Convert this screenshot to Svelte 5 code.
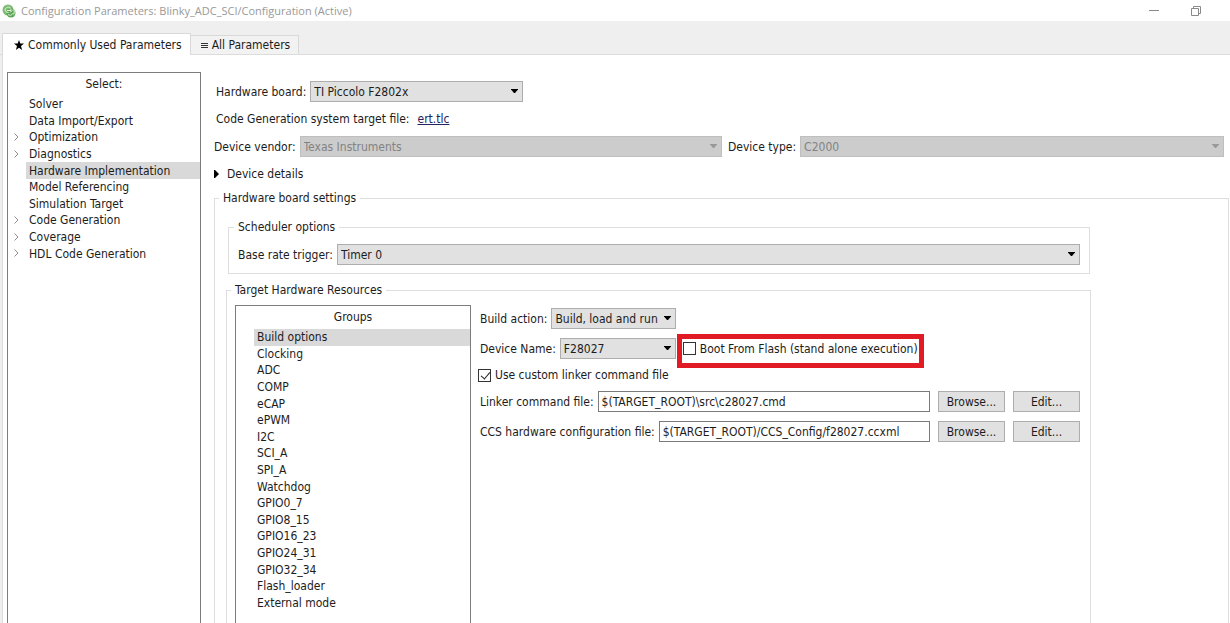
<script lang="ts">
	const pages = [
		{ name: 'Solver' },
		{ name: 'Data Import/Export' },
		{ name: 'Optimization', nested: true },
		{ name: 'Diagnostics', nested: true },
		{ name: 'Hardware Implementation' },
		{ name: 'Model Referencing' },
		{ name: 'Simulation Target' },
		{ name: 'Code Generation', nested: true },
		{ name: 'Coverage', nested: true },
		{ name: 'HDL Code Generation', nested: true }
	];

	const groups = [
		'Build options',
		'Clocking',
		'ADC',
		'COMP',
		'eCAP',
		'ePWM',
		'I2C',
		'SCI_A',
		'SPI_A',
		'Watchdog',
		'GPIO0_7',
		'GPIO8_15',
		'GPIO16_23',
		'GPIO24_31',
		'GPIO32_34',
		'Flash_loader',
		'External mode'
	];

	let page = $state('Hardware Implementation');
	let group = $state('Build options');
	let bootFromFlash = $state(false);
	let customLinker = $state(true);
	let linkerFile = $state('$(TARGET_ROOT)\\src\\c28027.cmd');
	let ccsFile = $state('$(TARGET_ROOT)/CCS_Config/f28027.ccxml');
</script>

{#snippet dropdown(id: string, value: string, disabled = false)}
	<span class="dropdown" class:disabled>
		<select {id} {disabled}>
			<option>{value}</option>
		</select>
		<svg class="arrow" viewBox="0 0 7 4" aria-hidden="true"><path d="M0 0h7v.5L4 4H3L0 .5z" /></svg>
	</span>
{/snippet}

<div class="window">
	<header class="titlebar">
		<svg class="logo" viewBox="0 0 14 14" aria-hidden="true">
			<circle cx="6" cy="6" r="5.5" fill="#7dbb72" />
			<circle cx="9" cy="9" r="4.5" fill="#5ba655" />
			<path
				d="M3 5.500C4 3 7 2.500 8.500 4M3 5.500c0 2 1.500 3 3.500 3M5 6.500h4M8 4.500l2 2-2 2M6 10.500c2 1.500 4.500.500 5-1.500M11.500 5.500c1 1.500 1 3.500 0 5"
				fill="none"
				stroke="#e5f4df"
			/>
		</svg>
		<span class="title">Configuration Parameters: Blinky_ADC_SCI/Configuration (Active)</span>
		<button class="windowButton" aria-label="Minimize">
			<svg viewBox="0 0 10 10"><path d="M0 4.500h10" /></svg>
		</button>
		<button class="windowButton" aria-label="Restore">
			<svg viewBox="0 0 10 10"><path d="M.5 2.500h7v7h-7zM2.500 2.500v-2h7v7h-2" /></svg>
		</button>
	</header>

	<nav class="tabs">
		<button class="tab active">
			<svg viewBox="0 0 10 10" aria-hidden="true">
				<path d="M5 0l1.300 3.600H10L7 6l1.100 4L5 7.700 1.900 10 3 6 0 3.600h3.700z" />
			</svg>
			Commonly Used Parameters
		</button>
		<button class="tab">
			<svg class="bars" viewBox="0 0 7 7" aria-hidden="true"><path d="M0 1.500h7M0 3.500h7M0 5.500h7" /></svg>
			All Parameters
		</button>
	</nav>

	<main>
		<aside class="panel sidebar">
			<h2>Select:</h2>
			<ul class="pages">
				{#each pages as item}
					<li>
						{#if item.nested}
							<svg class="chevron" viewBox="0 0 5 8" aria-hidden="true"><path d="M.5.500L4 4 .5 7.500" /></svg>
						{/if}
						<button class:selected={page === item.name} onclick={() => (page = item.name)}>
							{item.name}
						</button>
					</li>
				{/each}
			</ul>
		</aside>

		<section class="content">
			<div class="row indent board">
				<label for="board">Hardware board:</label>
				{@render dropdown('board', 'TI Piccolo F2802x')}
			</div>
			<div class="row indent target">
				<span>Code Generation system target file:</span>
				<a href="#ert">ert.tlc</a>
			</div>
			<div class="devices">
				<div class="row">
					<label for="vendor">Device vendor:</label>
					{@render dropdown('vendor', 'Texas Instruments', true)}
				</div>
				<div class="row">
					<label for="type">Device type:</label>
					{@render dropdown('type', 'C2000', true)}
				</div>
			</div>
			<button class="details">
				<svg viewBox="0 0 5 8" aria-hidden="true"><path d="M0 0h1l4 4-4 4H0z" /></svg>
				Device details
			</button>

			<fieldset class="settings">
				<legend>Hardware board settings</legend>

				<fieldset class="scheduler">
					<legend>Scheduler options</legend>
					<div class="row">
						<label for="trigger">Base rate trigger:</label>
						{@render dropdown('trigger', 'Timer 0')}
					</div>
				</fieldset>

				<fieldset class="resources">
					<legend>Target Hardware Resources</legend>

					<div class="panel groups">
						<h2>Groups</h2>
						<ul>
							{#each groups as name}
								<li>
									<button class:selected={group === name} onclick={() => (group = name)}>{name}</button>
								</li>
							{/each}
						</ul>
					</div>

					<div class="options">
						<div class="row action">
							<label for="action">Build action:</label>
							{@render dropdown('action', 'Build, load and run')}
						</div>
						<div class="row device">
							<label for="device">Device Name:</label>
							{@render dropdown('device', 'F28027')}
							<label class="check highlight">
								<input type="checkbox" bind:checked={bootFromFlash} />
								Boot From Flash (stand alone execution)
							</label>
						</div>
						<label class="check linker">
							<input type="checkbox" bind:checked={customLinker} />
							Use custom linker command file
						</label>
						<div class="file">
							<div class="row">
								<label for="linkerFile">Linker command file:</label>
								<input id="linkerFile" type="text" bind:value={linkerFile} />
							</div>
							<button class="push">Browse...</button>
							<button class="push">Edit...</button>
						</div>
						<div class="file">
							<div class="row">
								<label for="ccsFile">CCS hardware configuration file:</label>
								<input id="ccsFile" type="text" bind:value={ccsFile} />
							</div>
							<button class="push">Browse...</button>
							<button class="push">Edit...</button>
						</div>
					</div>
				</fieldset>
			</fieldset>
		</section>
	</main>
</div>

<style>
	:global(body) {
		background: #fff;
	}

	.window,
	.window * {
		box-sizing: border-box;
	}

	.window {
		display: flex;
		flex-flow: column;
		height: 100vh;
		overflow: hidden;
		color: #1c1c1c;
		font: 12px/16px 'DejaVu Sans Condensed', 'DejaVu Sans', sans-serif;
		white-space: nowrap;
	}

	button,
	input,
	select {
		margin: 0;
		color: inherit;
		font: inherit;
	}

	button {
		padding: 0;
		border: 0;
		background: none;
	}

	.titlebar {
		display: flex;
		flex: none;
		align-items: center;
		height: 21px;
		padding: 0 29px 0 2px;
		color: #999;
		font: 11px/16px 'Open Sans', 'Noto Sans', sans-serif;
	}

	.logo {
		width: 14px;
		height: 14px;
	}

	.title {
		flex: 1;
		padding-left: 5px;
	}

	.windowButton {
		display: flex;
		margin-left: 32px;
	}

	.windowButton svg {
		width: 10px;
		height: 10px;
		fill: none;
		stroke: #8a8a8a;
	}

	.tabs {
		display: flex;
		flex: none;
		align-items: flex-end;
		height: 34px;
		padding-left: 2px;
		border-bottom: 1px solid #dcdcdc;
		background: #efefef;
	}

	.tab {
		display: flex;
		align-items: center;
		gap: 4px;
		height: 19px;
		padding: 0 8px;
		border: 1px solid #d9d9d9;
		border-width: 1px 1px 0 0;
		background: #f2f2f2;
	}

	.tab.active {
		height: 22px;
		margin-bottom: -1px;
		padding-left: 11px;
		border-left-width: 1px;
		background: #fff;
	}

	.tab svg {
		width: 10px;
		height: 10px;
		fill: #000;
	}

	.tab .bars {
		width: 7px;
		height: 7px;
		margin-left: 2px;
		stroke: #333;
	}

	main {
		display: flex;
		flex: 1;
		gap: 13px;
		min-height: 0;
		margin-left: 2px;
		padding: 17px 1px 0 4px;
		border-left: 1px solid #dcdcdc;
		box-shadow: -2px 0 #efefef;
	}

	.panel {
		flex: none;
		border: 1px solid #7d7d7d;
		border-bottom: 0;
	}

	.panel h2 {
		margin: 0;
		font: inherit;
		line-height: 23px;
		text-align: center;
	}

	.panel ul {
		display: grid;
		grid-auto-rows: 1fr;
		height: 282px;
		margin: 0;
		padding: 0 0 0 18px;
		list-style: none;
	}

	.panel .pages {
		height: 166px;
	}

	.panel li {
		display: flex;
		position: relative;
		min-height: 0;
	}

	.panel li button {
		flex: 1;
		padding: 0 3px;
		text-align: left;
	}

	.panel .selected {
		background: #d9d9d9;
	}

	.chevron {
		position: absolute;
		top: 4px;
		left: -12px;
		width: 5px;
		height: 8px;
		fill: none;
		stroke: #8c8c8c;
	}

	.sidebar {
		width: 194px;
	}

	.content {
		display: flex;
		flex: 1;
		flex-flow: column;
		min-width: 0;
		padding-top: 9px;
	}

	.row {
		display: flex;
		align-items: center;
		gap: 4px;
	}

	.indent {
		padding-left: 2px;
	}

	.board .dropdown {
		flex: none;
		width: 213px;
	}

	.target {
		gap: 8px;
		margin: 9px 0;
	}

	.target a {
		color: #23235f;
	}

	.devices {
		display: flex;
		gap: 6px;
		padding-right: 5px;
	}

	.devices .row {
		flex: 1 1 0;
	}

	.devices .row:first-child {
		flex-basis: 12px;
	}

	.dropdown {
		display: flex;
		position: relative;
		flex: 1;
		height: 21px;
	}

	.dropdown select {
		flex: 1;
		min-width: 0;
		padding: 0 14px 0 3px;
		appearance: none;
		border: 1px solid #adadad;
		border-radius: 0;
		background: #e1e1e1;
	}

	.dropdown .arrow {
		position: absolute;
		top: 8px;
		right: 5px;
		width: 7px;
		height: 4px;
		pointer-events: none;
	}

	.disabled select {
		border-color: #bfbfbf;
		background: #ccc;
		color: #838383;
		opacity: 1;
	}

	.disabled .arrow {
		fill: #999;
	}

	.details {
		display: flex;
		align-items: center;
		align-self: flex-start;
		gap: 8px;
		margin: 9px 0 8px;
	}

	.details svg {
		width: 5px;
		height: 8px;
	}

	fieldset {
		min-width: 0;
		margin: 0;
		border: 1px solid #dedede;
	}

	legend {
		padding: 0 4px;
	}

	.settings {
		display: flex;
		flex: 1;
		flex-flow: column;
		gap: 8px;
		min-height: 0;
		padding: 13px 137px 0 11px;
		border-bottom: 0;
	}

	.settings > legend {
		margin-left: -7px;
	}

	.scheduler {
		flex: none;
		margin: 0 1px 0 2px;
		padding: 9px 9px 8px;
	}

	.scheduler legend,
	.resources legend {
		margin-left: -4px;
	}

	.resources {
		display: flex;
		flex: 1;
		gap: 9px;
		min-height: 0;
		padding: 7px 10px 0 8px;
		border-bottom: 0;
	}

	.groups {
		width: 236px;
	}

	.options {
		flex: 1;
		padding-top: 3px;
	}

	.action .dropdown,
	.device .dropdown {
		flex: none;
		width: 125px;
	}

	.device {
		margin-top: 9px;
	}

	.device .dropdown {
		width: 116px;
	}

	.check {
		display: flex;
		align-items: center;
		gap: 4px;
	}

	.check input {
		width: 13px;
		height: 13px;
		appearance: none;
		border: 1px solid #333;
		background: #fff;
	}

	.check input:checked::after {
		display: block;
		width: 4px;
		height: 8px;
		margin: 0 0 0 4px;
		border: solid #222;
		border-width: 0 1px 1px 0;
		content: '';
		transform: rotate(40deg);
	}

	.highlight {
		position: relative;
		margin-left: 3px;
	}

	.highlight::after {
		position: absolute;
		inset: -7px -6px -11px -6px;
		border: 5px solid #e01b24;
		content: '';
		pointer-events: none;
	}

	.linker {
		margin: 8px 0 8px -2px;
	}

	.file {
		display: flex;
		gap: 8px;
		margin-bottom: 9px;
	}

	.file .row {
		flex: 1;
	}

	.file input {
		flex: 1;
		min-width: 0;
		height: 21px;
		padding: 0 3px;
		border: 1px solid #7a7a7a;
		background: #fff;
	}

	.push {
		width: 67px;
		height: 21px;
		border: 1px solid #adadad;
		background: #e1e1e1;
	}
</style>
